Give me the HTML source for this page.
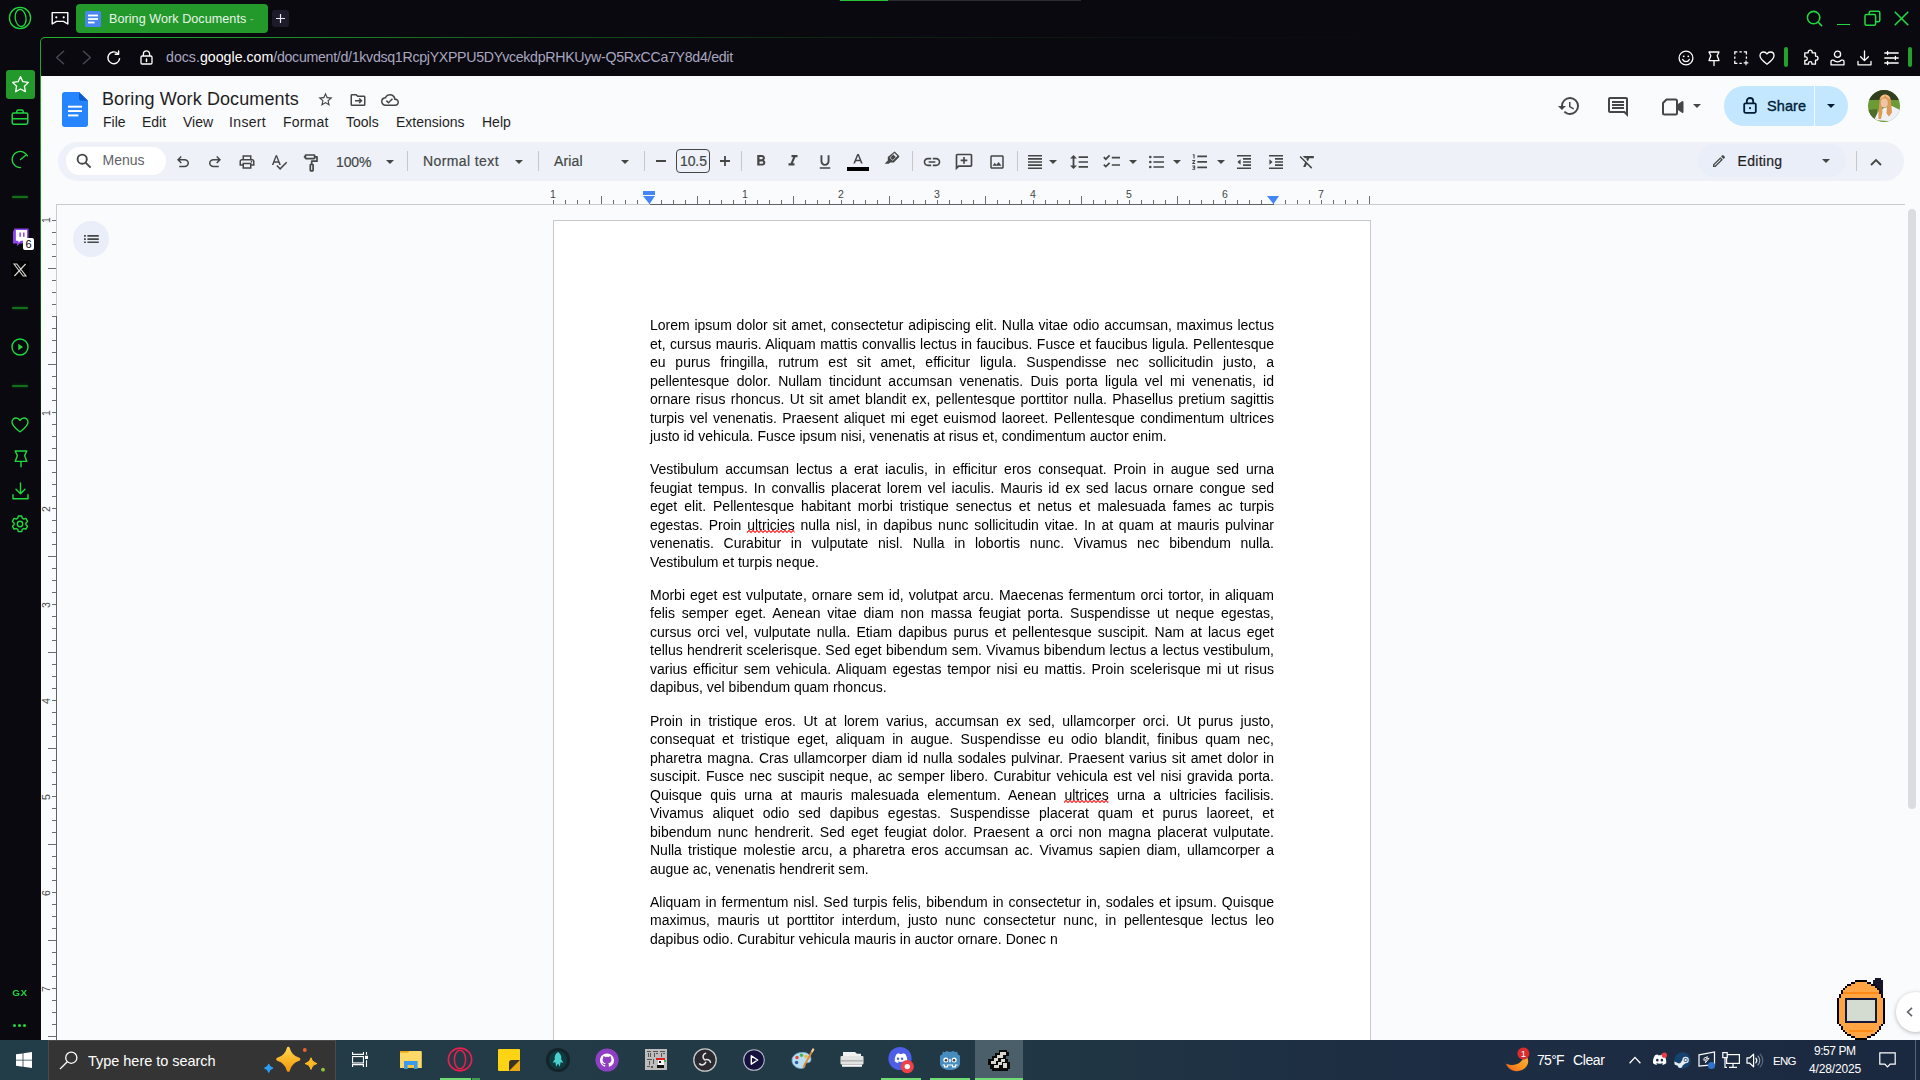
<!DOCTYPE html>
<html lang="en">
<head>
<meta charset="utf-8">
<title>Boring Work Documents - Google Docs</title>
<style>
*{box-sizing:border-box;margin:0;padding:0}
html,body{width:1920px;height:1080px;overflow:hidden}
body{background:#0a090f;font-family:"Liberation Sans",sans-serif;position:relative;color:#1f1f1f}
.abs{position:absolute}
svg{display:block;overflow:visible}
/* ---------- browser chrome ---------- */
#tabbar{left:0;top:0;width:1920px;height:38px;background:#0a090f}
#tab{left:76px;top:4px;width:192px;height:29px;background:#23992c;border-radius:4px;color:#e9f5e9;font-size:12.600px;line-height:29px;white-space:nowrap}
#tab .t{left:33px;top:.5px;letter-spacing:0.05px}
#newtab{left:272px;top:10px;width:17px;height:17px;background:#1d1b29;border-radius:3px}
#sidebar{left:0;top:38px;width:40px;height:1002px;background:#0a090f}
#frame{left:40px;top:38px;width:1880px;height:1002px;border-top-left-radius:5px;background:#0a090f;overflow:hidden}
#frameleft{left:40px;top:41px;width:1px;height:999px;background:linear-gradient(180deg,#1fa32a 0,#1fa32a 80px,#187a20 190px,#0f4314 290px,#0a1a0e 380px,#0a090f 470px)}
#framecorner{left:40px;top:37px;width:8px;height:8px;border-left:1px solid #1fa32a;border-top:1px solid #22b52e;border-top-left-radius:5px}
#frametop{left:45px;top:37px;width:1875px;height:1px;background:linear-gradient(90deg,#22b52e 0,#1c8f26 250px,#14501a 500px,#0e2412 800px,#0b1210 1100px,#0a090f 1400px);border-top-left-radius:5px}
#addr{left:47px;top:39px;width:1873px;height:37px;background:#0a090f}
#url{left:166px;top:48px;font-size:14.200px;line-height:18px;color:#a9a6c0;white-space:nowrap}
#url i{font-style:normal;letter-spacing:-0.300px}
#url b{font-weight:normal;color:#fff}
.gl{width:16px;height:2px;border-radius:1px;background:#12701b;box-shadow:0 0 3px #0c4a13;filter:blur(.7px)}
/* ---------- docs ---------- */
#docs{left:41px;top:76px;width:1879px;height:964px;background:#f9fbfd;overflow:hidden}
#title{left:102px;top:88px;font-size:18px;line-height:22px;white-space:nowrap;color:#1f1f1f;letter-spacing:0.1px}
.menu{top:113px;font-size:14px;line-height:18px;color:#1f1f1f;white-space:nowrap}
#toolbar{left:58px;top:141.500px;width:1846px;height:39.500px;border-radius:20px;background:#eef2f8}
#menus{left:66px;top:147px;width:100px;height:28px;border-radius:14px;background:#fff}
.tbt{font-size:14px;line-height:18px;color:#444746;white-space:nowrap;-webkit-text-stroke:.2px #444746}
.sep{width:1px;height:20px;top:151px;background:#c7c7c7}
#page{left:553px;top:220px;width:818px;height:830px;background:#fff;border:1px solid #c8c8c8}
#doctext{left:650px;top:316.300px;width:624px;font-size:14px;line-height:18.5px;color:#000;will-change:transform}
#doctext p{margin:0 0 14.700px 0}
#doctext span.l{display:block;height:18.5px;text-align:justify;text-align-last:justify;white-space:nowrap;overflow:visible}
#doctext span.e{text-align-last:left}
.sq{position:relative}
.sq svg{position:absolute;left:0;top:13.800px;width:100%;height:3px}
.rn{top:188px;width:10px;text-align:center;font-size:10.500px;line-height:12px;color:#444746}
.vn{left:40.200px;width:12px;height:10px;text-align:center;font-size:10.500px;line-height:10px;color:#444746;transform:rotate(-90deg)}
/* ---------- taskbar ---------- */
#taskbar{left:0;top:1040px;width:1920px;height:40px;background:linear-gradient(90deg,#223c48 0,#223a45 900px,#1d2e43 1350px,#1b2940 1920px)}
.tk{color:#fff;white-space:nowrap;line-height:18px}
#search{left:48px;top:1040px;width:288px;height:40px;background:#343434;border:1px solid #4b4b4b;border-bottom:none}
</style>
</head>
<body>
<div id="tabbar" class="abs"></div>
<div id="sidebar" class="abs"></div>
<div id="frametop" class="abs"></div>
<div id="frame" class="abs"></div>
<div id="frameleft" class="abs"></div>
<div id="framecorner" class="abs"></div>
<div id="addr" class="abs"></div>
<div id="docs" class="abs"></div>
<!-- Opera GX logo -->
<svg class="abs" style="left:8px;top:6px" width="24" height="24" viewBox="0 0 24 24" fill="none" stroke="#22d840" stroke-width="1.3"><circle cx="12" cy="12" r="10.6"/><ellipse cx="12.6" cy="12" rx="5.4" ry="8.6" transform="rotate(-8 12.6 12)"/></svg>
<!-- GX corner / gamepad icon -->
<svg class="abs" style="left:51px;top:11px" width="18" height="15" viewBox="0 0 18 15" fill="none" stroke="#fff" stroke-width="1.4" stroke-linejoin="round"><path d="M1.2 1.6h15.6v11.4l-4.3-2.6H5.5L1.2 13z"/><circle cx="5.3" cy="6.3" r="1.1" fill="#fff" stroke="none"/><circle cx="12.7" cy="6.3" r="1.1" fill="#fff" stroke="none"/></svg>
<div id="tab" class="abs">
  <svg class="abs" style="left:9px;top:7px" width="16" height="16" viewBox="0 0 16 16"><rect width="16" height="16" rx="1.5" fill="#4a86f0"/><rect x="3" y="3.6" width="10" height="1.8" fill="#fff"/><rect x="3" y="7.1" width="10" height="1.8" fill="#fff"/><rect x="3" y="10.6" width="6.6" height="1.8" fill="#fff"/></svg>
  <span class="abs t">Boring Work Documents <span style="opacity:.45">-</span></span>
</div>
<div id="newtab" class="abs"><svg class="abs" style="left:4px;top:4px" width="9" height="9" viewBox="0 0 9 9" stroke="#e8e8f0" stroke-width="1.2"><path d="M4.5 0v9M0 4.5h9"/></svg></div>
<!-- loading bar at very top -->
<div class="abs" style="left:840px;top:0;width:48px;height:1px;background:#25c335"></div>
<div class="abs" style="left:888px;top:0;width:193px;height:1px;background:#2c2b33"></div>
<!-- window controls -->
<svg class="abs" style="left:1805px;top:9px" width="20" height="20" viewBox="0 0 20 20" fill="none" stroke="#22d840" stroke-width="1.6" stroke-linecap="round"><circle cx="8.6" cy="8.6" r="6.2"/><path d="M13.2 13.2l3.4 3.4"/></svg>
<div class="abs" style="left:1837px;top:23.600px;width:13px;height:1.600px;background:#22d840"></div>
<svg class="abs" style="left:1864px;top:10px" width="17" height="17" viewBox="0 0 17 17" fill="none" stroke="#22d840" stroke-width="1.5" stroke-linejoin="round"><rect x="1" y="4.6" width="10.6" height="10.6" rx="1.5"/><path d="M5.2 4.4V2.8c0-.9.7-1.6 1.6-1.6h7.4c.9 0 1.6.7 1.6 1.6v7.4c0 .9-.7 1.6-1.6 1.6h-2.4"/></svg>
<svg class="abs" style="left:1894px;top:11px" width="15" height="15" viewBox="0 0 15 15" fill="none" stroke="#22d840" stroke-width="1.6" stroke-linecap="round"><path d="M1.2 1.2l12.6 12.6M13.8 1.2L1.2 13.8"/></svg>

<!-- active star button -->
<div class="abs" style="left:6px;top:70px;width:29px;height:29px;border-radius:3px;background:#23992c"></div>
<svg class="abs" style="left:11px;top:75px" width="19" height="19" viewBox="0 0 19 19" fill="none" stroke="#fff" stroke-width="1.3" stroke-linejoin="round"><path d="M9.500 1.600l2.400 5.100 5.500.700-4 3.800 1 5.500-4.900-2.700-4.900 2.700 1-5.500-4-3.800 5.500-.700z"/></svg>
<!-- briefcase -->
<svg class="abs" style="left:11px;top:108px" width="18" height="18" viewBox="0 0 18 18" fill="none" stroke="#22d840" stroke-width="1.4" stroke-linejoin="round"><rect x="1.200" y="5" width="15.600" height="11.200" rx="1.600"/><path d="M5.800 5V3.400c0-.800.600-1.400 1.400-1.400h3.600c.800 0 1.400.600 1.400 1.400V5M1.200 10.700h15.600"/></svg>
<!-- speedometer -->
<svg class="abs" style="left:11.200px;top:149.500px" width="19" height="19" viewBox="0 0 20 20" fill="none" stroke="#22d840" stroke-width="1.400" stroke-linecap="round"><path d="M17.300 6.200A8.500 8.500 0 1 0 10 18.500"/><path d="M10 10l5.300-4.300"/></svg>
<div class="abs gl" style="left:12px;top:196px"></div>
<!-- twitch -->
<svg class="abs" style="left:11.700px;top:228px" width="17.500" height="18.500" viewBox="0 0 18 19"><path d="M2.500 0.500L1 4v12h4.200v2.500L8 16h3.500L17 11V0.500z" fill="#8b44e8"/><path d="M4 2h11.500v8.200l-2.800 2.800H9l-2.400 2.200V13H4z" fill="#fff"/><rect x="7.600" y="4.600" width="1.500" height="4.500" fill="#8b44e8"/><rect x="11.400" y="4.600" width="1.500" height="4.500" fill="#8b44e8"/></svg>
<div class="abs" style="left:23px;top:238px;width:11px;height:12px;background:#fff;border-radius:2px;color:#000;font-size:11px;line-height:12px;text-align:center">6</div>
<!-- X -->
<div class="abs" style="left:11px;top:261px;width:18px;height:18px;background:#000"></div>
<svg class="abs" style="left:13px;top:263px" width="14" height="14" viewBox="0 0 14 14" fill="none" stroke="#d9d9d9" stroke-width="1.100"><path d="M1 1h2.800l9.200 12h-2.800zM12.600 1L1.400 13"/></svg>
<div class="abs gl" style="left:12px;top:307px"></div>
<!-- play -->
<svg class="abs" style="left:11px;top:338px" width="18" height="18" viewBox="0 0 18 18" fill="none" stroke="#22d840" stroke-width="1.400"><circle cx="9" cy="9" r="8"/><path d="M7.300 5.800l4.700 3.200-4.700 3.200z" fill="#22d840" stroke="none"/></svg>
<div class="abs gl" style="left:12px;top:385px"></div>
<!-- heart -->
<svg class="abs" style="left:11px;top:417px" width="18" height="16" viewBox="0 0 18 16" fill="none" stroke="#22d840" stroke-width="1.400" stroke-linejoin="round"><path d="M9 14.800C5 11.600 1 8.800 1 5.200 1 2.800 2.800 1 5 1c1.700 0 3.200.900 4 2.300C9.800 1.900 11.300 1 13 1c2.200 0 4 1.800 4 4.200 0 3.600-4 6.400-8 9.600z"/></svg>
<!-- pin -->
<svg class="abs" style="left:13.500px;top:450px" width="14" height="18" viewBox="0 0 14 18" fill="none" stroke="#22d840" stroke-width="1.400" stroke-linejoin="round" stroke-linecap="round"><path d="M1.200 1h11.600L10.600 5.600l2.200 5.800H1.200l2.200-5.800z"/><path d="M7 11.400v5.400"/></svg>
<!-- download -->
<svg class="abs" style="left:12px;top:482px" width="17" height="18" viewBox="0 0 17 18" fill="none" stroke="#22d840" stroke-width="1.400" stroke-linecap="round" stroke-linejoin="round"><path d="M8.500 1v10.600M4 7.300l4.500 4.500L13 7.300M1 12.600v4.200h15v-4.200"/></svg>
<!-- gear -->
<svg class="abs" style="left:11px;top:515px" width="18" height="18" viewBox="0 0 18 18" fill="none" stroke="#22d840" stroke-width="1.400" stroke-linejoin="round"><path d="M7.300 1h3.400l.5 2.200 1.500.9 2.200-.7 1.700 3-1.700 1.500v1.800l1.700 1.500-1.700 3-2.200-.7-1.500.9-.5 2.200H7.300l-.5-2.200-1.500-.9-2.200.7-1.700-3 1.700-1.500V7.900L1.400 6.400l1.700-3 2.200.7 1.500-.9z"/><circle cx="9" cy="9" r="2.700"/></svg>
<div class="abs" style="left:10px;top:986.700px;width:20px;color:#22d840;font-size:8.600px;line-height:12px;font-weight:bold;text-align:center;letter-spacing:0.500px;transform:scaleX(1.150)">GX</div>
<div class="abs" style="left:13px;top:1024px;width:3px;height:3px;border-radius:50%;background:#22d840;box-shadow:5px 0 0 #22d840,10px 0 0 #22d840"></div>

<svg class="abs" style="left:55px;top:50px" width="10" height="15" viewBox="0 0 10 15" fill="none" stroke="#4a4856" stroke-width="1.4" stroke-linecap="round" stroke-linejoin="round"><path d="M8.6 1.2L1.6 7.5l7 6.3"/></svg>
<svg class="abs" style="left:82px;top:50px" width="10" height="15" viewBox="0 0 10 15" fill="none" stroke="#4a4856" stroke-width="1.4" stroke-linecap="round" stroke-linejoin="round"><path d="M1.4 1.2l7 6.3-7 6.3"/></svg>
<svg class="abs" style="left:106px;top:50px" width="16" height="16" viewBox="0 0 16 16" fill="none" stroke="#fff" stroke-width="1.4" stroke-linecap="round" stroke-linejoin="round"><path d="M13.6 8.6a5.9 5.9 0 1 1-1.9-5.2"/><path d="M12.6 0.9v3.4H9.2"/></svg>
<svg class="abs" style="left:140px;top:50px" width="13" height="15" viewBox="0 0 13 15" fill="none" stroke="#fff" stroke-width="1.3" stroke-linejoin="round"><rect x="1" y="6" width="11" height="8" rx="1.2"/><path d="M3.4 6V3.9a3.1 3.1 0 0 1 6.2 0V6"/><path d="M6.5 9v2.4" stroke-linecap="round" stroke-width="1.5"/></svg>
<div id="url" class="abs">docs.<b>google.com</b><i>/document/d/1kvdsq1RcpjYXPPU5DYvcekdpRHKUyw-Q5RxCCa7Y8d4/edit</i></div>
<!-- right side toolbar icons -->
<svg class="abs" style="left:1678px;top:50px" width="16" height="16" viewBox="0 0 16 16" fill="none" stroke="#fff" stroke-width="1.3"><circle cx="8" cy="8" r="6.9"/><circle cx="5.7" cy="6.3" r="0.9" fill="#fff" stroke="none"/><circle cx="10.3" cy="6.3" r="0.9" fill="#fff" stroke="none"/><path d="M4.7 9.4a3.6 3.6 0 0 0 6.6 0" stroke-linecap="round"/></svg>
<svg class="abs" style="left:1707.500px;top:50.500px" width="12" height="16" viewBox="0 0 12 16" fill="none" stroke="#fff" stroke-width="1.300" stroke-linejoin="round" stroke-linecap="round"><path d="M1 1h10L9.200 4.800 11 9.600H1l1.800-4.800z"/><path d="M6 9.600v5"/></svg>
<svg class="abs" style="left:1733.500px;top:51px" width="14" height="14" viewBox="0 0 14 14" fill="none" stroke="#fff" stroke-width="1.300"><path d="M.8 3.400V.8h2.600M5.400.8h2.400M9.800.8h2.600v2.600M12.400 5.400v2.400M.8 5.400v2.400M.8 9.800v2.600h2.600M5.400 12.400h2.400"/><path d="M12 9.600v4.600M9.700 11.900h4.600" stroke-width="1.100"/></svg>
<svg class="abs" style="left:1759px;top:51px" width="16" height="14" viewBox="0 0 16 14" fill="none" stroke="#fff" stroke-width="1.3" stroke-linejoin="round"><path d="M8 13.200C4.500 10.400 1 7.900 1 4.700 1 2.600 2.600 1 4.600 1 6 1 7.300 1.800 8 3c.7-1.200 2-2 3.400-2 2 0 3.600 1.600 3.600 3.700 0 3.200-3.500 5.700-7 8.500z"/></svg>
<div class="abs" style="left:1784px;top:47px;width:4px;height:20px;border-radius:2px;background:#23a12c"></div>
<svg class="abs" style="left:1802px;top:49px" width="17" height="17" viewBox="0 0 17 17" fill="none" stroke="#fff" stroke-width="1.3" stroke-linejoin="round"><path d="M6.200 3.200a2 2 0 0 1 4 0v.600h3.300v3.400h.500a2 2 0 0 1 0 4h-.500v4H9.900v-.800a1.700 1.700 0 0 0-3.400 0v.800H2.800v-3.700h.700a1.800 1.800 0 0 0 0-3.600h-.700V3.800h3.400z"/></svg>
<svg class="abs" style="left:1830px;top:50px" width="15" height="16" viewBox="0 0 15 16" fill="none" stroke="#fff" stroke-width="1.3" stroke-linejoin="round"><circle cx="7.500" cy="4.300" r="3.100"/><path d="M1 14.800v-3.200c0-.800.600-1.400 1.400-1.400h1.300c.9 1 2.200 1.600 3.800 1.600s2.900-.600 3.800-1.600h1.300c.8 0 1.400.600 1.400 1.400v3.200z"/></svg>
<svg class="abs" style="left:1857px;top:50px" width="15" height="16" viewBox="0 0 15 16" fill="none" stroke="#fff" stroke-width="1.300" stroke-linecap="round" stroke-linejoin="round"><path d="M7.500 1v9.400M3.600 6.700l3.900 3.900 3.900-3.900M1 11.400v3.400h13v-3.400"/></svg>
<svg class="abs" style="left:1884px;top:51px" width="15" height="14" viewBox="0 0 15 14" fill="none" stroke="#fff" stroke-width="1.300" stroke-linecap="round"><path d="M0.800 2h13.400M0.800 7h13.400M0.800 12h13.400M3.600 0.400v3.200M11.400 5.400v3.200M3.600 10.400v3.200"/></svg>
<div class="abs" style="left:1908px;top:47px;width:4px;height:20px;border-radius:2px;background:#23a12c"></div>

<!-- docs logo -->
<svg class="abs" style="left:62px;top:91.500px" width="26" height="35" viewBox="0 0 26 36" preserveAspectRatio="none"><path d="M2.600 0H17l9 9v24.400c0 1.400-1.200 2.600-2.600 2.600H2.600C1.200 36 0 34.800 0 33.400V2.600C0 1.200 1.200 0 2.600 0z" fill="#2684fc"/><path d="M17 0l9 9h-6.400C18.200 9 17 7.800 17 6.400z" fill="#0c5bd1"/><rect x="6" y="14.100" width="14" height="2" fill="#fff"/><rect x="6" y="18.600" width="14" height="2" fill="#fff"/><rect x="6" y="23.100" width="10.400" height="2" fill="#fff"/></svg>
<div id="title" class="abs">Boring Work Documents</div>
<!-- star / move / cloud -->
<svg class="abs" style="left:317px;top:91px" width="17" height="17" viewBox="0 0 24 24" fill="#444746"><path d="M22 9.240l-7.190-.620L12 2 9.190 8.630 2 9.240l5.460 4.730L5.820 21 12 17.270 18.180 21l-1.630-7.030L22 9.240zM12 15.400l-3.760 2.270 1-4.280-3.320-2.880 4.380-.380L12 6.100l1.710 4.040 4.380.380-3.320 2.880 1 4.280L12 15.400z"/></svg>
<svg class="abs" style="left:349px;top:91px" width="18" height="18" viewBox="0 0 24 24" fill="#444746"><path d="M20 6h-8l-2-2H4c-1.100 0-2 .900-2 2v12c0 1.100.900 2 2 2h16c1.100 0 2-.900 2-2V8c0-1.100-.900-2-2-2zm0 12H4V6h5.170l2 2H20v10zm-7.160-2.590L14.250 16.820 18.070 13l-3.820-3.820-1.410 1.410L14.240 12H8v2h6.240l-1.400 1.410z"/></svg>
<svg class="abs" style="left:381px;top:91px" width="18" height="18" viewBox="0 0 24 24" fill="#444746"><path d="M19.350 10.040A7.490 7.490 0 0 0 12 4C9.110 4 6.600 5.640 5.350 8.040A5.994 5.994 0 0 0 0 14c0 3.310 2.690 6 6 6h13c2.760 0 5-2.240 5-5 0-2.640-2.050-4.780-4.650-4.960zM19 18H6c-2.210 0-4-1.790-4-4s1.790-4 4-4h.710C7.370 7.690 9.480 6 12 6c3.040 0 5.500 2.460 5.500 5.500v.500H19c1.660 0 3 1.340 3 3s-1.340 3-3 3zm-9-3.820l-2.090-2.090L6.500 13.500 10 17l6.010-6.010-1.410-1.410z"/></svg>
<!-- menus -->
<div class="abs menu" style="left:103px">File</div>
<div class="abs menu" style="left:142px">Edit</div>
<div class="abs menu" style="left:183px">View</div>
<div class="abs menu" style="left:229px;letter-spacing:.35px">Insert</div>
<div class="abs menu" style="left:283px;letter-spacing:.2px">Format</div>
<div class="abs menu" style="left:346px">Tools</div>
<div class="abs menu" style="left:396px">Extensions</div>
<div class="abs menu" style="left:482px">Help</div>
<!-- right header icons -->
<svg class="abs" style="left:1557px;top:94px" width="24" height="24" viewBox="0 0 24 24" fill="#444746"><path d="M13 3a9 9 0 0 0-9 9H1l3.890 3.890.070.140L9 12H6c0-3.870 3.130-7 7-7s7 3.130 7 7-3.130 7-7 7c-1.930 0-3.680-.790-4.940-2.060l-1.420 1.420A8.954 8.954 0 0 0 13 21a9 9 0 0 0 0-18zm-1 5v5l4.250 2.520.770-1.280-3.520-2.090V8z"/></svg>
<svg class="abs" style="left:1606px;top:95px" width="24" height="24" viewBox="0 0 24 24" fill="#444746"><path d="M21.990 4c0-1.100-.890-2-1.990-2H4c-1.100 0-2 .900-2 2v12c0 1.100.900 2 2 2h14l4 4-.010-18zM20 4v13.170L18.830 16H4V4h16zM6 12h12v2H6zm0-3h12v2H6zm0-3h12v2H6z"/></svg>
<svg class="abs" style="left:1662px;top:98px" width="22" height="18" viewBox="0 0 22 18" fill="none" stroke="#444746" stroke-width="2" stroke-linejoin="round"><path d="M4.500 1.500h9c.8 0 1.500.7 1.500 1.500v12c0 .8-.7 1.500-1.500 1.500h-11C1.700 16.500 1 15.800 1 15V5z"/><path d="M15.500 7.500l5-3.500v10l-5-3.500z" fill="#444746"/></svg>
<svg class="abs" style="left:1693px;top:104px" width="8" height="4" viewBox="0 0 8 4"><path d="M0 0h8L4 4z" fill="#444746"/></svg>
<!-- share -->
<div class="abs" style="left:1724px;top:86px;width:124px;height:40px;border-radius:20px;background:#c2e7ff"></div>
<div class="abs" style="left:1814px;top:86px;width:1px;height:40px;background:#f4f9fd"></div>
<svg class="abs" style="left:1743px;top:97px" width="14" height="17" viewBox="0 0 14 17" fill="none" stroke="#001d35" stroke-width="1.800"><rect x="1.200" y="6.400" width="11.600" height="9.400" rx="1.200"/><path d="M3.800 6.400V4.200a3.200 3.200 0 0 1 6.400 0v2.200"/><circle cx="7" cy="11.100" r="1.100" fill="#001d35" stroke="none"/></svg>
<div class="abs" style="left:1767px;top:97px;font-size:14.500px;line-height:18px;color:#001d35;-webkit-text-stroke:.35px #001d35;letter-spacing:.1px">Share</div>
<svg class="abs" style="left:1827px;top:104px" width="8" height="4" viewBox="0 0 8 4"><path d="M0 0h8L4 4z" fill="#001d35"/></svg>
<!-- avatar -->
<svg class="abs" style="left:1868px;top:90px" width="32" height="32" viewBox="0 0 32 32"><defs><clipPath id="avc"><circle cx="16" cy="16" r="16"/></clipPath></defs><g clip-path="url(#avc)"><rect width="32" height="32" fill="#6b9a37"/><rect width="32" height="10" fill="#323f1f"/><path d="M0 20l9-1v13H0z" fill="#4e6d2b"/><path d="M6 30l4-8 6-4 8-2 8 4v12z" fill="#eef0f5"/><path d="M11.500 11c0-4 2.200-6.500 5.500-6.500s5.800 2.300 6 6.500c.2 4 .8 8 1 11.500l-3 4-2.500-3 .5-8-5 .5.500 6-1.500 7h-2.500c-.5-6 .5-12 1-18z" fill="#dc9a56"/><ellipse cx="16.300" cy="13" rx="3.500" ry="4.500" fill="#efc5a8"/><path d="M12 9c1-3 3-4.500 5.500-4.300 2.500.2 4 1.800 4.700 4.300-2-.8-3.700-2-5-3.500-1.200 1.500-3 2.800-5.200 3.500z" fill="#f0c48e"/></g></svg>

<div id="toolbar" class="abs"></div>
<div class="abs" style="left:1698px;top:144px;width:148px;height:33px;border-radius:16px;background:#e9eef9"></div>
<div id="menus" class="abs"></div>
<svg class="abs" style="left:76px;top:153px" width="16" height="16" viewBox="0 0 16 16" fill="none" stroke="#444746" stroke-width="1.900"><circle cx="6.200" cy="6.200" r="4.600"/><path d="M9.600 9.600l5 5" stroke-linecap="butt"/></svg>
<div class="abs tbt" style="left:102.500px;top:151px;color:#5f6368;-webkit-text-stroke:0">Menus</div>
<!-- undo / redo -->
<svg class="abs" style="left:174px;top:153px" width="18" height="18" viewBox="0 0 24 24" fill="#444746"><path d="M7 19v-2h7.100q1.575 0 2.737-1Q18 15 18 13.500T16.838 11Q15.675 10 14.100 10H7.800l2.600 2.600L9 14 4 9l5-5 1.400 1.400L7.800 8h6.300q2.425 0 4.163 1.575Q20 11.150 20 13.500q0 2.350-1.737 3.925Q16.525 19 14.100 19z"/></svg>
<svg class="abs" style="left:206px;top:153px;transform:scaleX(-1)" width="18" height="18" viewBox="0 0 24 24" fill="#444746"><path d="M7 19v-2h7.100q1.575 0 2.737-1Q18 15 18 13.500T16.838 11Q15.675 10 14.100 10H7.800l2.600 2.600L9 14 4 9l5-5 1.400 1.400L7.800 8h6.300q2.425 0 4.163 1.575Q20 11.150 20 13.500q0 2.350-1.737 3.925Q16.525 19 14.100 19z"/></svg>
<!-- print -->
<svg class="abs" style="left:238px;top:153px" width="18" height="18" viewBox="0 0 24 24" fill="#444746"><path d="M16 8V5H8v3H6V3h12v5zm2 4.500q.425 0 .713-.288T19 11.500t-.288-.713T18 10.500t-.713.288T17 11.500t.288.713.713.288zM16 19v-4H8v4zm2 2H6v-4H2v-6q0-1.275.875-2.137T5 8h14q1.275 0 2.138.863T22 11v6h-4zm2-6v-4q0-.425-.288-.713T19 10H5q-.425 0-.713.288T4 11v4h2v-2h12v2z"/></svg>
<!-- spellcheck -->
<svg class="abs" style="left:270px;top:153px" width="18" height="18" viewBox="0 0 24 24" fill="#444746"><path d="M12.450 16h2.090L9.430 3H7.570L2.460 16h2.090l1.120-3h5.640l1.140 3zm-6.020-5L8.500 5.480 10.570 11H6.430zm15.160.590l-8.090 8.090L9.830 16l-1.410 1.410 5.090 5.090L23 13l-1.410-1.410z"/></svg>
<!-- paint format -->
<svg class="abs" style="left:303px;top:154px" width="15" height="18" viewBox="0 0 15 18" fill="none" stroke="#444746" stroke-width="1.700" stroke-linejoin="round"><rect x="2.400" y="1" width="9.200" height="3.600" rx=".6"/><path d="M11.600 2.800h2.400v4.400H8.700v3.300"/><rect x="7.300" y="10.500" width="2.800" height="6.300" rx=".5"/><path d="M2.400 2.800H.8"/></svg>
<div class="abs tbt" style="left:336px;top:153px;letter-spacing:-.1px">100%</div>
<svg class="abs" style="left:386px;top:160px" width="8" height="4" viewBox="0 0 8 4"><path d="M0 0h8L4 4z" fill="#444746"/></svg>
<div class="abs sep" style="left:407px"></div>
<div class="abs tbt" style="left:423px;top:152px;letter-spacing:.4px">Normal text</div>
<svg class="abs" style="left:515px;top:160px" width="8" height="4" viewBox="0 0 8 4"><path d="M0 0h8L4 4z" fill="#444746"/></svg>
<div class="abs sep" style="left:538px"></div>
<div class="abs tbt" style="left:554px;top:152px;letter-spacing:.15px">Arial</div>
<svg class="abs" style="left:621px;top:160px" width="8" height="4" viewBox="0 0 8 4"><path d="M0 0h8L4 4z" fill="#444746"/></svg>
<div class="abs sep" style="left:644px"></div>
<div class="abs" style="left:656px;top:160.200px;width:10px;height:1.600px;background:#444746"></div>
<div class="abs" style="left:676px;top:149px;width:34px;height:24px;border:1px solid #444746;border-radius:4px"></div>
<div class="abs tbt" style="left:680px;top:152px;letter-spacing:-.1px">10.5</div>
<svg class="abs" style="left:720px;top:156px" width="10" height="10" viewBox="0 0 10 10" stroke="#444746" stroke-width="1.800"><path d="M5 0v10M0 5h10"/></svg>
<div class="abs sep" style="left:741px"></div>
<!-- B I U A -->
<svg class="abs" style="left:752px;top:152px" width="18" height="18" viewBox="0 0 24 24" fill="#444746"><path d="M15.600 10.790c.970-.670 1.650-1.770 1.650-2.790 0-2.260-1.750-4-4-4H7v14h7.040c2.090 0 3.710-1.700 3.710-3.790 0-1.520-.860-2.820-2.150-3.420zM10 6.500h3c.830 0 1.500.670 1.500 1.500s-.670 1.500-1.500 1.500h-3v-3zm3.500 9H10v-3h3.500c.830 0 1.500.670 1.500 1.500s-.670 1.500-1.500 1.500z"/></svg>
<svg class="abs" style="left:784px;top:152px" width="18" height="18" viewBox="0 0 24 24" fill="#444746"><path d="M10 4v3h2.210l-3.420 8H6v3h8v-3h-2.210l3.420-8H18V4z"/></svg>
<svg class="abs" style="left:816px;top:153px" width="18" height="18" viewBox="0 0 24 24" fill="#444746"><path d="M12 17c3.310 0 6-2.690 6-6V3h-2.500v8c0 1.930-1.570 3.500-3.500 3.500S8.500 12.930 8.500 11V3H6v8c0 3.310 2.690 6 6 6zm-7 2v2h14v-2H5z"/></svg>
<svg class="abs" style="left:853px;top:154px" width="10" height="10" viewBox="0 0 10 10" fill="#444746"><path d="M4.200 0h1.600L9.700 9.500H8L7.100 7.200H2.900L2 9.500H.3zM3.400 5.800h3.200L5 1.700z"/></svg>
<div class="abs" style="left:847px;top:167px;width:22px;height:4px;background:#000"></div>
<!-- highlighter -->
<svg class="abs" style="left:884px;top:151px" width="16" height="15" viewBox="0 0 16 15" fill="#444746"><path d="M10.600.4l4.400 4.400c.4.400.4 1 0 1.400L9.800 11.400H6.200L4.800 12.800H.6l3.200-3.200V6z" /><path d="M5.600 6.700l3.100 3.100 4.700-4.700-3.100-3.100z" fill="#eef2f8"/><path d="M6.300 6.700l3.100-3.100 2.400 2.400-3.100 3.100z" fill="#444746"/></svg>
<div class="abs sep" style="left:912px"></div>
<!-- link -->
<svg class="abs" style="left:922px;top:152px" width="20" height="20" viewBox="0 0 24 24" fill="#444746"><path d="M3.900 12c0-1.710 1.390-3.100 3.100-3.100h4V7H7c-2.760 0-5 2.240-5 5s2.240 5 5 5h4v-1.900H7c-1.710 0-3.100-1.390-3.100-3.100zM8 13h8v-2H8v2zm9-6h-4v1.900h4c1.710 0 3.100 1.390 3.100 3.100s-1.390 3.100-3.100 3.100h-4V17h4c2.760 0 5-2.240 5-5s-2.240-5-5-5z"/></svg>
<!-- add comment -->
<svg class="abs" style="left:954px;top:152px" width="20" height="20" viewBox="0 0 24 24" fill="#444746"><path d="M20 2H4c-1.100 0-2 .900-2 2v18l4-4h14c1.100 0 2-.900 2-2V4c0-1.100-.900-2-2-2zm0 14H5.170L4 17.170V4h16v12zM11 14h2v-3h3V9h-3V6h-2v3H8v2h3z"/></svg>
<!-- image -->
<svg class="abs" style="left:988px;top:153px" width="18" height="18" viewBox="0 0 24 24" fill="#444746"><path d="M19 5v14H5V5h14m0-2H5c-1.100 0-2 .900-2 2v14c0 1.100.900 2 2 2h14c1.100 0 2-.900 2-2V5c0-1.100-.900-2-2-2zm-4.860 8.860l-3 3.870L9 13.140 6 17h12l-3.860-5.140z"/></svg>
<div class="abs sep" style="left:1017px"></div>
<!-- align justify -->
<svg class="abs" style="left:1028px;top:155px" width="14" height="14" viewBox="0 0 14 14" fill="#444746"><path d="M0 0h14v1.600H0zM0 3.100h14v1.600H0zM0 6.200h14v1.600H0zM0 9.300h14v1.600H0zM0 12.400h14v1.600H0z"/></svg>
<svg class="abs" style="left:1049px;top:160px" width="8" height="4" viewBox="0 0 8 4"><path d="M0 0h8L4 4z" fill="#444746"/></svg>
<!-- line spacing -->
<svg class="abs" style="left:1070px;top:155px" width="18" height="14" viewBox="0 0 18 14" fill="#444746"><path d="M3.500 0L0 3.500h2.600v7H0L3.500 14 7 10.500H4.400v-7H7zM8.600 1.300H18v1.700H8.600zM8.600 6.150H18v1.700H8.600zM8.600 11H18v1.700H8.600z"/></svg>
<!-- checklist -->
<svg class="abs" style="left:1103px;top:154px" width="17" height="15" viewBox="0 0 17 15" fill="none" stroke="#444746" stroke-width="1.700"><path d="M.8 3.200l2 2L6.600 1.400M.8 10.600l2 2 3.800-3.800" stroke-linejoin="miter"/><path d="M8.800 3.600H17M8.800 11H17"/></svg>
<svg class="abs" style="left:1129px;top:160px" width="8" height="4" viewBox="0 0 8 4"><path d="M0 0h8L4 4z" fill="#444746"/></svg>
<!-- bullets -->
<svg class="abs" style="left:1149px;top:155px" width="15" height="14" viewBox="0 0 15 14" fill="#444746"><circle cx="1.300" cy="2" r="1.300"/><circle cx="1.300" cy="7" r="1.300"/><circle cx="1.300" cy="12" r="1.300"/><path d="M4.400 1.150H15v1.700H4.400zM4.400 6.150H15v1.700H4.400zM4.400 11.150H15v1.700H4.400z"/></svg>
<svg class="abs" style="left:1173px;top:160px" width="8" height="4" viewBox="0 0 8 4"><path d="M0 0h8L4 4z" fill="#444746"/></svg>
<!-- numbered -->
<svg class="abs" style="left:1192px;top:154px" width="15" height="16" viewBox="0 0 15 16" fill="#444746"><path d="M.9.200h1.700v4.300H1.500V1.200H.6zM.3 5.900h2.900v1.100L1.600 8.900h1.600v1H.3v-1l1.700-2H.3zM.3 11.500h2.900v4.300H.3v-1h1.900v-.7H.9v-.9h1.300v-.7H.3zM5.300 1.500H15v1.700H5.300zM5.300 7H15v1.700H5.300zM5.300 12.500H15v1.700H5.300z"/></svg>
<svg class="abs" style="left:1217px;top:160px" width="8" height="4" viewBox="0 0 8 4"><path d="M0 0h8L4 4z" fill="#444746"/></svg>
<!-- indent dec / inc -->
<svg class="abs" style="left:1237px;top:155px" width="14" height="14" viewBox="0 0 14 14" fill="#444746"><path d="M0 0h14v1.600H0zM0 12.400h14v1.600H0zM6 3.100h8v1.600H6zM6 6.200h8v1.600H6zM6 9.300h8v1.600H6zM3.600 4.200v5.600L.4 7z"/></svg>
<svg class="abs" style="left:1269px;top:155px" width="14" height="14" viewBox="0 0 14 14" fill="#444746"><path d="M0 0h14v1.600H0zM0 12.400h14v1.600H0zM6 3.100h8v1.600H6zM6 6.200h8v1.600H6zM6 9.300h8v1.600H6zM.4 4.200v5.600L3.600 7z"/></svg>
<!-- clear formatting -->
<svg class="abs" style="left:1298px;top:152px" width="19" height="19" viewBox="0 0 24 24" fill="#444746"><path d="M3.270 5L2 6.270l6.970 6.970L6.500 19h3l1.570-3.660L16.730 21 18 19.730 3.550 5.270 3.270 5zM6 5v.180L8.820 8h2.400l-.720 1.680 2.100 2.100L14.210 8H20V5H6z"/></svg>
<!-- editing -->
<svg class="abs" style="left:1711px;top:153px" width="16" height="16" viewBox="0 0 24 24" fill="#444746"><path d="M3 17.250V21h3.750L17.810 9.940l-3.750-3.750L3 17.250zM5.920 19H5v-.920l9.060-9.060.920.920L5.920 19zM20.710 5.630l-2.340-2.340a.996.996 0 0 0-1.410 0l-1.830 1.830 3.750 3.750 1.830-1.830a.996.996 0 0 0 0-1.410z"/></svg>
<div class="abs tbt" style="left:1737.500px;top:152px;letter-spacing:.3px;color:#1f1f1f;-webkit-text-stroke:.2px #1f1f1f">Editing</div>
<svg class="abs" style="left:1822px;top:159px" width="8" height="4" viewBox="0 0 8 4"><path d="M0 0h8L4 4z" fill="#444746"/></svg>
<div class="abs sep" style="left:1856px"></div>
<svg class="abs" style="left:1870px;top:158px" width="12" height="8" viewBox="0 0 12 8" fill="none" stroke="#444746" stroke-width="1.800"><path d="M1 7l5-5 5 5"/></svg>

<!-- horizontal ruler -->
<div class="abs" style="left:56px;top:204px;width:1849px;height:1px;background:#c9cacb"></div>
<div class="abs" style="left:650px;top:204px;width:624px;height:1px;background:#5f6368"></div>
<div class="abs" style="left:553px;top:200px;width:818px;height:4px;background:repeating-linear-gradient(90deg,#6a6d70 0,#6a6d70 1px,transparent 1px,transparent 12px)"></div>
<div class="abs" style="left:601px;top:196px;width:770px;height:4px;background:repeating-linear-gradient(90deg,#6a6d70 0,#6a6d70 1px,transparent 1px,transparent 96px)"></div>
<div class="abs" style="left:1369px;top:196px;width:1px;height:8px;background:#6a6d70"></div>
<div class="abs rn" style="left:548px">1</div>
<div class="abs rn" style="left:740px">1</div>
<div class="abs rn" style="left:836px">2</div>
<div class="abs rn" style="left:932px">3</div>
<div class="abs rn" style="left:1028px">4</div>
<div class="abs rn" style="left:1124px">5</div>
<div class="abs rn" style="left:1220px">6</div>
<div class="abs rn" style="left:1316px">7</div>
<div class="abs" style="left:643px;top:191px;width:12px;height:4px;background:#4285f4"></div>
<svg class="abs" style="left:643px;top:196px" width="12" height="8" viewBox="0 0 12 8"><path d="M0 0h12L6.500 8z" fill="#4285f4"/></svg>
<svg class="abs" style="left:1267px;top:196px" width="12" height="8" viewBox="0 0 12 8"><path d="M0 0h12L6.500 8z" fill="#4285f4"/></svg>
<!-- vertical ruler -->
<div class="abs" style="left:56px;top:204px;width:1px;height:836px;background:#c9cacb"></div>
<div class="abs" style="left:56px;top:316px;width:1px;height:724px;background:#5f6368"></div>
<div class="abs" style="left:52px;top:220px;width:4px;height:820px;background:repeating-linear-gradient(180deg,#6a6d70 0,#6a6d70 1px,transparent 1px,transparent 12px)"></div>
<div class="abs" style="left:48px;top:268px;width:4px;height:772px;background:repeating-linear-gradient(180deg,#6a6d70 0,#6a6d70 1px,transparent 1px,transparent 96px)"></div>
<div class="abs vn" style="top:215px">1</div>
<div class="abs vn" style="top:408px">1</div>
<div class="abs vn" style="top:504px">2</div>
<div class="abs vn" style="top:600px">3</div>
<div class="abs vn" style="top:696px">4</div>
<div class="abs vn" style="top:792px">5</div>
<div class="abs vn" style="top:888px">6</div>
<div class="abs vn" style="top:984px">7</div>
<!-- outline button -->
<div class="abs" style="left:73px;top:221px;width:36px;height:36px;border-radius:18px;background:#e9eef8"></div>
<svg class="abs" style="left:84px;top:235.100px" width="15" height="8.200" viewBox="0 0 15 8.200" fill="#444746"><path d="M0 0h1.800v1.700H0zM3.400 0h11.400v1.700H3.400zM0 3.200h1.800v1.700H0zM3.400 3.200h11.400v1.700H3.400zM0 6.400h1.800v1.700H0zM3.400 6.400h11.400v1.700H3.400z"/></svg>
<!-- scrollbar -->
<div class="abs" style="left:1908px;top:209px;width:8px;height:600px;border-radius:4px;background:#dadce0"></div>

<div id="page" class="abs"></div>
<div id="doctext" class="abs">
<p><span class="l">Lorem ipsum dolor sit amet, consectetur adipiscing elit. Nulla vitae odio accumsan, maximus lectus</span>
<span class="l">et, cursus mauris. Aliquam mattis convallis lectus in faucibus. Fusce et faucibus ligula. Pellentesque</span>
<span class="l">eu purus fringilla, rutrum est sit amet, efficitur ligula. Suspendisse nec sollicitudin justo, a</span>
<span class="l">pellentesque dolor. Nullam tincidunt accumsan venenatis. Duis porta ligula vel mi venenatis, id</span>
<span class="l">ornare risus rhoncus. Ut sit amet blandit ex, pellentesque porttitor nulla. Phasellus pretium sagittis</span>
<span class="l">turpis vel venenatis. Praesent aliquet mi eget euismod laoreet. Pellentesque condimentum ultrices</span>
<span class="l e">justo id vehicula. Fusce ipsum nisi, venenatis at risus et, condimentum auctor enim.</span></p>
<p><span class="l">Vestibulum accumsan lectus a erat iaculis, in efficitur eros consequat. Proin in augue sed urna</span>
<span class="l">feugiat tempus. In convallis placerat lorem vel iaculis. Mauris id ex sed lacus ornare congue sed</span>
<span class="l">eget elit. Pellentesque habitant morbi tristique senectus et netus et malesuada fames ac turpis</span>
<span class="l">egestas. Proin <span class="sq">ultricies<svg height="3"><defs><pattern id="zz" width="4" height="3" patternUnits="userSpaceOnUse"><path d="M0 2.600L2 .4 4 2.600" fill="none" stroke="#ff1414" stroke-width="1.100"/></pattern></defs><rect width="100%" height="3" fill="url(#zz)"/></svg></span> nulla nisl, in dapibus nunc sollicitudin vitae. In at quam at mauris pulvinar</span>
<span class="l">venenatis. Curabitur in vulputate nisl. Nulla in lobortis nunc. Vivamus nec bibendum nulla.</span>
<span class="l e">Vestibulum et turpis neque.</span></p>
<p><span class="l">Morbi eget est vulputate, ornare sem id, volutpat arcu. Maecenas fermentum orci tortor, in aliquam</span>
<span class="l">felis semper eget. Aenean vitae diam non massa feugiat porta. Suspendisse ut neque egestas,</span>
<span class="l">cursus orci vel, vulputate nulla. Etiam dapibus purus et pellentesque suscipit. Nam at lacus eget</span>
<span class="l">tellus hendrerit scelerisque. Sed eget bibendum sem. Vivamus bibendum lectus a lectus vestibulum,</span>
<span class="l">varius efficitur sem vehicula. Aliquam egestas tempor nisi eu mattis. Proin scelerisque mi ut risus</span>
<span class="l e">dapibus, vel bibendum quam rhoncus.</span></p>
<p><span class="l">Proin in tristique eros. Ut at lorem varius, accumsan ex sed, ullamcorper orci. Ut purus justo,</span>
<span class="l">consequat et tristique eget, aliquam in augue. Suspendisse eu odio blandit, finibus quam nec,</span>
<span class="l">pharetra magna. Cras ullamcorper diam id nulla sodales pulvinar. Praesent varius sit amet dolor in</span>
<span class="l">suscipit. Fusce nec suscipit neque, ac semper libero. Curabitur vehicula est vel nisi gravida porta.</span>
<span class="l">Quisque quis urna at mauris malesuada elementum. Aenean <span class="sq">ultrices<svg height="3"><rect width="100%" height="3" fill="url(#zz)"/></svg></span> urna a ultricies facilisis.</span>
<span class="l">Vivamus aliquet odio sed dapibus egestas. Suspendisse placerat quam et purus laoreet, et</span>
<span class="l">bibendum nunc hendrerit. Sed eget feugiat dolor. Praesent a orci non magna placerat vulputate.</span>
<span class="l">Nulla tristique molestie arcu, a pharetra eros accumsan ac. Vivamus sapien diam, ullamcorper a</span>
<span class="l e">augue ac, venenatis hendrerit sem.</span></p>
<p><span class="l">Aliquam in fermentum nisl. Sed turpis felis, bibendum in consectetur in, sodales et ipsum. Quisque</span>
<span class="l">maximus, mauris ut porttitor interdum, justo nunc consectetur nunc, in pellentesque lectus leo</span>
<span class="l e">dapibus odio. Curabitur vehicula mauris in auctor ornare. Donec n</span></p>
</div>

<!-- floating widgets bottom-right of docs -->
<div class="abs" style="left:1896px;top:992px;width:40px;height:40px;border-radius:20px;background:#fff;box-shadow:0 1px 4px rgba(60,64,67,.35)"></div>
<svg class="abs" style="left:1906px;top:1007px" width="7" height="10" viewBox="0 0 7 10" fill="none" stroke="#5f6368" stroke-width="1.600"><path d="M6 .8L1.600 5 6 9.200"/></svg>
<svg class="abs" style="left:1835px;top:976px" width="52" height="64" viewBox="0 0 52 64" shape-rendering="crispEdges"><path d="M40 2L46 2L46 4L48 4L48 22L42 22L42 10L38 10L38 4L40 4z" fill="#17152b"/><rect x="20" y="4" width="12" height="2" fill="#000"/><rect x="16" y="6" width="20" height="2" fill="#000"/><rect x="12" y="8" width="28" height="2" fill="#000"/><rect x="10" y="10" width="32" height="2" fill="#000"/><rect x="8" y="12" width="36" height="2" fill="#000"/><rect x="6" y="14" width="40" height="2" fill="#000"/><rect x="6" y="16" width="40" height="2" fill="#000"/><rect x="4" y="18" width="44" height="2" fill="#000"/><rect x="4" y="20" width="44" height="2" fill="#000"/><rect x="2" y="22" width="48" height="2" fill="#000"/><rect x="2" y="24" width="48" height="2" fill="#000"/><rect x="2" y="26" width="48" height="2" fill="#000"/><rect x="2" y="28" width="48" height="2" fill="#000"/><rect x="2" y="30" width="48" height="2" fill="#000"/><rect x="2" y="32" width="48" height="2" fill="#000"/><rect x="2" y="34" width="48" height="2" fill="#000"/><rect x="2" y="36" width="48" height="2" fill="#000"/><rect x="2" y="38" width="48" height="2" fill="#000"/><rect x="2" y="40" width="48" height="2" fill="#000"/><rect x="2" y="42" width="48" height="2" fill="#000"/><rect x="2" y="44" width="48" height="2" fill="#000"/><rect x="2" y="46" width="48" height="2" fill="#000"/><rect x="4" y="48" width="44" height="2" fill="#000"/><rect x="6" y="50" width="40" height="2" fill="#000"/><rect x="6" y="52" width="40" height="2" fill="#000"/><rect x="8" y="54" width="36" height="2" fill="#000"/><rect x="10" y="56" width="32" height="2" fill="#000"/><rect x="12" y="58" width="28" height="2" fill="#000"/><rect x="16" y="60" width="20" height="2" fill="#000"/><rect x="20" y="62" width="12" height="2" fill="#000"/><rect x="20" y="6" width="12" height="2" fill="#ffa544"/><rect x="16" y="8" width="20" height="2" fill="#ffa544"/><rect x="12" y="10" width="28" height="2" fill="#ffa544"/><rect x="10" y="12" width="32" height="2" fill="#ffa544"/><rect x="8" y="14" width="36" height="2" fill="#ffa544"/><rect x="8" y="16" width="36" height="2" fill="#ffa544"/><rect x="6" y="18" width="40" height="2" fill="#ffa544"/><rect x="6" y="20" width="40" height="2" fill="#ffa544"/><rect x="4" y="22" width="44" height="2" fill="#ffa544"/><rect x="4" y="24" width="44" height="2" fill="#ffa544"/><rect x="4" y="26" width="44" height="2" fill="#ffa544"/><rect x="4" y="28" width="44" height="2" fill="#ffa544"/><rect x="4" y="30" width="44" height="2" fill="#ffa544"/><rect x="4" y="32" width="44" height="2" fill="#ffa544"/><rect x="4" y="34" width="44" height="2" fill="#ffa544"/><rect x="4" y="36" width="44" height="2" fill="#ffa544"/><rect x="4" y="38" width="44" height="2" fill="#ffa544"/><rect x="4" y="40" width="44" height="2" fill="#ffa544"/><rect x="4" y="42" width="44" height="2" fill="#ffa544"/><rect x="4" y="44" width="44" height="2" fill="#ffa544"/><rect x="4" y="46" width="44" height="2" fill="#ffa544"/><rect x="6" y="48" width="40" height="2" fill="#ffa544"/><rect x="8" y="50" width="36" height="2" fill="#ffa544"/><rect x="8" y="52" width="36" height="2" fill="#ffa544"/><rect x="10" y="54" width="32" height="2" fill="#ffa544"/><rect x="12" y="56" width="28" height="2" fill="#ffa544"/><rect x="16" y="58" width="20" height="2" fill="#ffa544"/><rect x="20" y="60" width="12" height="2" fill="#ffa544"/><rect x="8" y="16" width="36" height="2" fill="#ff8a16"/><rect x="14" y="54" width="24" height="2" fill="#ff8a16"/><rect x="10" y="22" width="32" height="25" fill="#15183a"/><rect x="12" y="24" width="28" height="21" fill="#d4dcd2"/></svg>
<!-- taskbar -->
<div id="taskbar" class="abs"></div>
<svg class="abs" style="left:16px;top:1052px" width="16" height="16" viewBox="0 0 16 16" fill="#fff"><path d="M0 2.300l6.600-.9v6.300H0zM7.400 1.300L16 0v7.700H7.400zM0 8.400h6.600v6.300L0 13.800zM7.400 8.400H16V16l-8.600-1.200z"/></svg>
<div id="search" class="abs"></div>
<svg class="abs" style="left:59px;top:1050px" width="20" height="20" viewBox="0 0 20 20" fill="none" stroke="#fff" stroke-width="1.300"><circle cx="12.300" cy="7.700" r="5.600"/><path d="M8.300 11.700L1 19"/></svg>
<div class="abs" style="left:88px;top:1051.500px;font-size:14.500px;line-height:18px;color:#fff;white-space:nowrap;letter-spacing:-.03px">Type here to search</div>
<!-- sparkles -->
<svg class="abs" style="left:262px;top:1044px" width="66" height="32" viewBox="0 0 66 32"><defs><linearGradient id="gs" x1="0" y1="0" x2="0" y2="1"><stop offset="0" stop-color="#ffd34a"/><stop offset="1" stop-color="#f59a0c"/></linearGradient></defs><path d="M26.300 4.300c1.400 6 4.300 9 10.600 11-6.300 2-9.200 5-10.600 11-1.400-6-4.300-9-10.600-11 6.300-2 9.200-5 10.600-11z" fill="url(#gs)" stroke="url(#gs)" stroke-width="3" stroke-linejoin="round"/><path d="M49 14.200c.5 3 1.800 4.400 5.400 5.400-3.600 1-4.900 2.400-5.400 5.400-.5-3-1.800-4.400-5.400-5.400 3.600-1 4.900-2.400 5.400-5.400z" fill="#fdb924" stroke="#fdb924" stroke-width="1.500" stroke-linejoin="round"/><path d="M6.700 20.300c.4 2.200 1.300 3.200 3.900 3.900-2.600.7-3.500 1.700-3.900 3.900-.4-2.200-1.300-3.200-3.900-3.900 2.600-.7 3.500-1.700 3.900-3.900z" fill="#2b9df4" stroke="#2b9df4" stroke-width="1.300" stroke-linejoin="round"/><circle cx="42.800" cy="6" r="1.900" fill="#f2622a"/><circle cx="61" cy="25.700" r="1.900" fill="#8cc63f"/></svg>
<!-- task view -->
<svg class="abs" style="left:351px;top:1051px" width="18" height="17" viewBox="0 0 18 17" fill="none" stroke="#fff" stroke-width="1.100"><rect x="1.550" y="5.550" width="10.900" height="6.400"/><path d="M1.550 1v2.400h10.900V1M1.550 16v-2.400h10.900V16"/><path d="M15.500 1v2.800M15.500 9.300V16"/><rect x="14" y="4.800" width="3" height="3.200" fill="#fff" stroke="none"/></svg>
<!-- file explorer -->
<svg class="abs" style="left:400px;top:1050px" width="22" height="19" viewBox="0 0 22 19"><path d="M0 1h9.200l-1.300 2.600H0z" fill="#e9a313"/><path d="M9.200 1L7.900 2.200H0V18h21.800V2.200c0-.7-.5-1.200-1.200-1.200z" fill="#ffd968"/><path d="M0 1h9.200L8 2.400H0z" fill="#eaa414"/><path d="M4 11h13.600v8h-3.700v-4H7.800v4H4z" fill="#3b9bea"/><rect x="7.800" y="15" width="6.100" height="3" fill="#fbc535"/></svg>
<!-- opera gx -->
<svg class="abs" style="left:447px;top:1047px" width="26" height="25" viewBox="0 0 26 25" fill="none" stroke="#ee1f4f"><ellipse cx="13" cy="12.500" rx="11.600" ry="11.300" stroke-width="1.700"/><ellipse cx="13" cy="12.500" rx="5.600" ry="9.300" stroke-width="1.500"/></svg>
<div class="abs" style="left:440px;top:1078px;width:31px;height:2px;background:#71db74"></div>
<div class="abs" style="left:472px;top:1078px;width:8px;height:2px;background:#3f9b52"></div>
<!-- sticky notes -->
<svg class="abs" style="left:498px;top:1049px" width="22" height="22" viewBox="0 0 22 22"><rect width="22" height="22" rx="1" fill="#fcd414"/><path d="M22 11v11H11z" fill="#e9a90f"/><path d="M22 11L11 22V13.500c0-1.400 1.100-2.500 2.500-2.500z" fill="#3a3324"/></svg>
<!-- teal app -->
<svg class="abs" style="left:546px;top:1048px" width="24" height="24" viewBox="0 0 24 24"><circle cx="12" cy="12" r="12" fill="#14222a"/><circle cx="12" cy="12" r="9.200" fill="#0f3a40"/><path d="M12 4c2.600 1.800 3.800 4.200 3.200 7.200l2.200 3.600-2.800-.6-.8 4.600-1.800-3.200-1.800 3.200-.8-4.600-2.800.6 2.200-3.600C8.200 8.200 9.400 5.800 12 4z" fill="#49d0cc"/></svg>
<!-- github desktop -->
<svg class="abs" style="left:595px;top:1048px" width="24" height="24" viewBox="0 0 24 24"><circle cx="12" cy="12" r="11.600" fill="#8e3fc4"/><path d="M12 5.400c-3.900 0-7 3-7 6.800 0 3 2 5.600 4.800 6.500.35.060.48-.15.480-.33v-1.300c-1.950.42-2.360-.82-2.360-.82-.32-.8-.78-1-.78-1-.64-.43.050-.42.050-.42.700.050 1.070.70 1.070.70.620 1.050 1.640.75 2.040.57.060-.44.240-.75.440-.92-1.550-.17-3.190-.76-3.190-3.360 0-.74.270-1.350.72-1.830-.070-.17-.31-.86.070-1.800 0 0 .59-.18 1.930.7a6.800 6.800 0 0 1 3.500 0c1.340-.88 1.930-.7 1.930-.7.380.94.140 1.630.070 1.800.45.480.72 1.090.72 1.830 0 2.610-1.640 3.190-3.200 3.360.25.210.48.630.48 1.270v1.880c0 .18.120.40.480.33A6.830 6.830 0 0 0 19 12.200c0-3.800-3.100-6.800-7-6.800z" fill="#fff"/></svg>
<!-- pixel tool icon -->
<svg class="abs" style="left:645px;top:1049px" width="22" height="21" viewBox="0 0 22 21" shape-rendering="crispEdges"><rect width="22" height="21" fill="#bdbdbd"/><path d="M2 2h4v1H2zM8 2h5v1H8zM15 2h5v1h-5zM3 4h1v4H3zM5 4h1v4H5zM9 4h1v4H9zM11 4h2v1h-2zM16 4h1v4h-1zM18 4h2v1h-2zM2 10h5v1H2zM4 12h1v4H4zM8 10h1v5H8zM2 17h3v1H2zM6 17h2v2H6z" fill="#555"/><rect x="11" y="9" width="9" height="2" fill="#e02020"/><rect x="13" y="11" width="6" height="5" fill="#fff"/><rect x="14" y="12" width="2" height="2" fill="#111"/><rect x="12" y="16" width="7" height="3" fill="#111"/><rect x="19" y="11" width="2" height="2" fill="#36b336"/></svg>
<!-- OBS -->
<svg class="abs" style="left:693px;top:1048px" width="24" height="24" viewBox="0 0 24 24"><circle cx="12" cy="12" r="11.200" fill="#2c2a31" stroke="#c9c9c9" stroke-width="1.300"/><g fill="none" stroke="#e9e9e9" stroke-width="1.500" stroke-linecap="round"><path d="M12.600 5.200c-2.600.9-3.400 3.900-1.500 6"/><path d="M17.500 14.300c-.5-2.700-3.500-3.500-5.900-2.400"/><path d="M6.600 15.900c2.100 1.800 5.100 1 6.100-1.600"/></g></svg>
<!-- play app -->
<svg class="abs" style="left:743px;top:1049px" width="22" height="22" viewBox="0 0 22 22"><circle cx="11" cy="11" r="10.300" fill="#14123d" stroke="#b9bacb" stroke-width="1.100"/><path d="M8.300 6.800l6.400 4.200-6.400 4.200z" fill="none" stroke="#fff" stroke-width="1.400" stroke-linejoin="round"/></svg>
<!-- paint -->
<svg class="abs" style="left:790px;top:1047px" width="26" height="26" viewBox="0 0 26 26"><path d="M11 5.500c5.500-.8 10 2.200 10 6.800 0 3-2.300 3.600-4.200 3.400-1.700-.2-2.600.9-2 2.400.8 2-1 3.600-4 3.400C5.800 21.200 1.800 17.600 2 13c.2-4 4-7 9-7.500z" fill="#b9def2" stroke="#6fa6cb" stroke-width=".8"/><circle cx="7" cy="10.500" r="1.700" fill="#e4483c"/><circle cx="11.500" cy="8.200" r="1.700" fill="#4caf50"/><circle cx="16" cy="9.500" r="1.700" fill="#f3b73a"/><circle cx="6.600" cy="15.500" r="1.700" fill="#355c9a"/><path d="M22.800 1.200l1.600 1-9.800 17.600-2 1.400.4-2.400z" fill="#e08a32"/><path d="M22.800 1.200l1.600 1-1.800 3.200-1.600-1z" fill="#f3d9a8"/></svg>
<!-- scanner -->
<svg class="abs" style="left:840px;top:1051px" width="24" height="17" viewBox="0 0 24 17"><path d="M3 1h12l2 1.800h4V7H3z" fill="#f1f1f1"/><rect x=".5" y="5" width="23" height="8.500" rx="1" fill="#e2e2e2"/><rect x=".5" y="9.200" width="23" height="1.200" fill="#a8a8a8"/><rect x="2" y="13.500" width="20" height="2.300" fill="#f6f6f6"/></svg>
<!-- discord -->
<svg class="abs" style="left:888px;top:1046px" width="28" height="28" viewBox="0 0 28 28"><circle cx="12" cy="12.500" r="11.600" fill="#4d5fe6"/><path d="M17.300 8.100a10 10 0 0 0-2.600-.8l-.3.700a9.300 9.300 0 0 0-2.800 0l-.3-.7a10 10 0 0 0-2.600.8c-1.700 2.500-2.100 4.900-1.900 7.300a10 10 0 0 0 3.200 1.600l.7-1.100-1-.5.200-.2a7.300 7.300 0 0 0 6.200 0l.2.200-1 .5.700 1.100a10 10 0 0 0 3.200-1.600c.3-2.800-.5-5.200-1.900-7.300zM10 14a1.200 1.300 0 1 1 0-2.600A1.200 1.300 0 0 1 10 14zm4.100 0a1.200 1.300 0 1 1 0-2.600 1.200 1.300 0 0 1 0 2.600z" fill="#fff"/><circle cx="19.300" cy="20.600" r="6.600" fill="#ef4146"/><circle cx="19.300" cy="20.600" r="2.700" fill="#fff"/></svg>
<div class="abs" style="left:881px;top:1078px;width:40px;height:2px;background:#71db74"></div>
<!-- godot -->
<svg class="abs" style="left:938px;top:1048px" width="24" height="24" viewBox="0 0 24 24"><path d="M5 3.500l2 .8 1.500-1.500 2 1h3l2-1L17 4.300l2-.8.800 2.700 2.200 1.500v8.500c-1 3.800-5 5.800-10 5.800s-9-2-10-5.800V7.700l2.200-1.500z" fill="#478cbf"/><circle cx="7.800" cy="12" r="2.500" fill="#fff"/><circle cx="16.200" cy="12" r="2.500" fill="#fff"/><circle cx="8" cy="12.200" r="1.300" fill="#414042"/><circle cx="16" cy="12.200" r="1.300" fill="#414042"/><rect x="11.200" y="11" width="1.600" height="3.400" rx=".8" fill="#fff"/><path d="M4.500 17h2v1.800h3V17h5v1.800h3V17h2" fill="none" stroke="#fff" stroke-width="1.200"/></svg>
<div class="abs" style="left:930px;top:1078px;width:40px;height:2px;background:#71db74"></div>
<!-- active app -->
<div class="abs" style="left:975px;top:1040px;width:48px;height:40px;background:#4a5f6a"></div>
<div class="abs" style="left:975px;top:1078px;width:48px;height:2px;background:#71db74"></div>
<svg class="abs" style="left:988px;top:1050px" width="22" height="21" viewBox="0 0 22 21" shape-rendering="crispEdges"><path d="M11 0h8v2h2v4h-3v3h2v3h2v7h-2v2H4v-2H2v-4H0V9h4V6h3V3h4z" fill="#0a0a0a"/><path d="M12 2h6v3h-3v3h-3zM9 5h3v3H9zM6 8h4v3H6zM13 9h4v3h-4zM3 11h5v3H3zM10 12h4v3h-4zM15 13h4v5h-4zM6 15h5v3H6z" fill="#d8d8d0"/></svg>
<!-- weather -->
<svg class="abs" style="left:1504px;top:1046px" width="28" height="28" viewBox="0 0 28 28"><defs><linearGradient id="gm" x1="1" y1="0" x2="0" y2="1"><stop offset="0" stop-color="#fdb83c"/><stop offset=".55" stop-color="#f7931e"/><stop offset="1" stop-color="#ef5a24"/></linearGradient></defs><path d="M20.500 9c3 1.500 4.400 5 3.400 8.500-1.300 4.600-6 7.900-11.500 7.700C7.600 25 3.600 22 1.800 17.500c3 1.600 7.400 2.200 11.200.6 4-1.700 6.800-5.200 7.500-9.100z" fill="url(#gm)"/><circle cx="19.400" cy="7.500" r="6" fill="#d92c2c"/></svg>
<div class="abs" style="left:1519px;top:1047px;width:9px;font-size:9.500px;line-height:13px;color:#fff;text-align:center">1</div>
<div class="abs tk" style="left:1537px;top:1051px;font-size:14px;letter-spacing:-.7px">75°F</div>
<div class="abs tk" style="left:1573px;top:1051px;font-size:14px;letter-spacing:-.4px">Clear</div>
<svg class="abs" style="left:1629px;top:1056px" width="12" height="8" viewBox="0 0 12 8" fill="none" stroke="#fff" stroke-width="1.300"><path d="M.6 7.200L6 1.400l5.400 5.800"/></svg>
<!-- tray: discord -->
<svg class="abs" style="left:1652px;top:1053px" width="16" height="13" viewBox="0 0 16 13"><path d="M12.200 2.300A11 11 0 0 0 9.500 1.500l-.4.800a10 10 0 0 0-3 0l-.4-.8a11 11 0 0 0-2.700.8C1.200 5 .8 7.600 1 10.200a11 11 0 0 0 3.400 1.700l.7-1.200-1.100-.5.300-.2a7.900 7.900 0 0 0 6.600 0l.3.200-1.100.5.700 1.200a11 11 0 0 0 3.400-1.700c.3-3-.5-5.600-2-7.900zM5.300 8.600a1.300 1.400 0 1 1 0-2.800 1.300 1.400 0 0 1 0 2.800zm4.600 0a1.300 1.400 0 1 1 0-2.800 1.300 1.400 0 0 1 0 2.800z" fill="#fff"/><circle cx="12.400" cy="2.200" r="2.600" fill="#ee3b4a"/></svg>
<!-- tray: steam -->
<svg class="abs" style="left:1674px;top:1052px" width="17" height="17" viewBox="0 0 17 17"><circle cx="8.500" cy="8.500" r="8.300" fill="#16426f"/><path d="M.3 9.500l4.600 1.900a2.400 2.400 0 0 1 1.500-.4l2-3a3.200 3.200 0 1 1 3.200 3.200l-3 2.200a2.400 2.400 0 0 1-4.800.3L.6 12.400z" fill="#e9eef3"/><circle cx="11.600" cy="8" r="2" fill="#16426f"/><circle cx="11.600" cy="8" r="1.200" fill="#e9eef3"/></svg>
<!-- tray: display -->
<svg class="abs" style="left:1698px;top:1051px" width="18" height="19" viewBox="0 0 18 19" fill="none" stroke="#fff" stroke-width="1.200"><path d="M1 3.800L16.500 1v12.600L1 15.200z"/><path d="M6 7.200l3.500-1.500-1 2.300 2.500-.6-3.600 4.400.8-3.100-2.300.7z" stroke-width=".9"/><circle cx="13.500" cy="14.500" r="3.600" fill="#2f73c9" stroke="none"/></svg>
<!-- tray: network -->
<svg class="abs" style="left:1722px;top:1052px" width="18" height="17" viewBox="0 0 18 17" fill="none" stroke="#fff" stroke-width="1.200"><rect x="4.600" y="2.600" width="12.800" height="8.800"/><path d="M11 11.400v3.400M7 15.400h8"/><rect x=".8" y=".6" width="4.400" height="5" fill="#1e3046"/><path d="M3 5.600v9.800h2"/></svg>
<!-- tray: volume -->
<svg class="abs" style="left:1746px;top:1052px" width="18" height="17" viewBox="0 0 18 17" fill="none" stroke="#fff" stroke-width="1.200" stroke-linejoin="round"><path d="M1 5.800h2.800l3.800-3.600v12.600L3.800 11.200H1z"/><path d="M9.800 6.200a3.400 3.400 0 0 1 0 4.600" stroke-linecap="round"/><path d="M12 4.200a6.200 6.200 0 0 1 0 8.600" stroke="#9aa5b4" stroke-linecap="round"/><path d="M14.200 2.200a9 9 0 0 1 0 12.600" stroke="#5d6b7e" stroke-linecap="round"/></svg>
<div class="abs tk" style="left:1773px;top:1052px;font-size:11.500px;letter-spacing:-.75px">ENG</div>
<div class="abs tk" style="left:1814px;top:1042px;font-size:12px;letter-spacing:-.45px">9:57 PM</div>
<div class="abs tk" style="left:1809px;top:1060px;font-size:12px;letter-spacing:-.15px">4/28/2025</div>
<svg class="abs" style="left:1879px;top:1052px" width="17" height="17" viewBox="0 0 17 17" fill="none" stroke="#fff" stroke-width="1.200" stroke-linejoin="miter"><path d="M.8.800h15.400v11.400h-5L8.500 15l-2.700-2.800h-5z"/></svg>
<div class="abs" style="left:1915px;top:1040px;width:1px;height:40px;background:#56647a"></div>

</body>
</html>
